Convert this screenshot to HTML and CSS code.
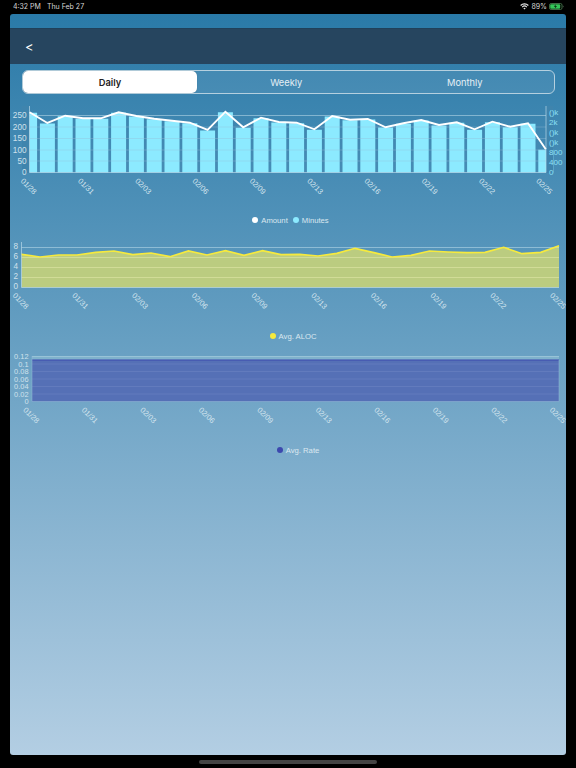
FILE: index.html
```html
<!DOCTYPE html>
<html lang="en">
<head>
<meta charset="utf-8">
<title>Daily charts</title>
<link rel="stylesheet" href="styles.css">
</head>
<body>
<div class="status">
  <div class="status-left"><span>4:32 PM</span><span>Thu Feb 27</span></div>
  <div class="status-right">
    <svg class="wifi" viewBox="0 0 12 9"><path d="M6 8.6 4.4 6.8a2.3 2.3 0 0 1 3.2 0zM3.4 5.8 2.4 4.7a5.2 5.2 0 0 1 7.2 0L8.6 5.8a3.8 3.8 0 0 0-5.2 0zM1.4 3.7.3 2.6a8.2 8.2 0 0 1 11.4 0l-1.1 1.1a6.7 6.7 0 0 0-9.2 0z"/></svg>
    <span>89%</span>
    <svg class="battery" viewBox="0 0 15 7"><rect class="bat-shell" x=".5" y=".5" width="12.5" height="6" rx="1.6"/><rect class="bat-fill" x="1.2" y="1.2" width="10" height="4.6" rx="1"/><path class="bat-bolt" d="M6.8 1.2 4.8 3.8h1.5l-.5 2 2.2-2.7H6.5z"/><path class="bat-cap" d="M13.8 2.5c.6.2.9.6.9 1s-.3.8-.9 1z"/></svg>
  </div>
</div>
<main class="app">
  <header class="topbar"><span class="back">&lt;</span></header>
  <nav class="segments">
    <div class="segment active">Daily</div>
    <div class="segment">Weekly</div>
    <div class="segment">Monthly</div>
  </nav>

  <section class="chart chart-one">
    <svg class="plot plot-one" viewBox="10 100 556 100">
      <path class="bars" d="M29.6 172.5V112.8M47.4 172.5V123.5M65.2 172.5V116.2M83 172.5V118.8M100.8 172.5V118.8M118.6 172.5V112.8M136.4 172.5V116.5M154.2 172.5V119.2M172 172.5V121.2M189.8 172.5V123.2M207.6 172.5V130.5M225.4 172.5V112.2M243.2 172.5V127.8M261 172.5V118.2M278.8 172.5V122.5M296.6 172.5V123.2M314.4 172.5V129.8M332.2 172.5V116.5M350 172.5V120.2M367.8 172.5V119.5M385.6 172.5V127.5M403.4 172.5V123.8M421.2 172.5V120.5M439 172.5V125.5M456.8 172.5V122.8M474.6 172.5V129.8M492.4 172.5V122.2M510.2 172.5V127.2M528 172.5V123.8M545.8 172.5V149.8"/>
      <path class="edge-mask" d="M22 106h7.5v67H22zM546 106h7v67h-7z"/>
      <path class="grid-strong" d="M29.5 115.5H546"/>
      <path class="grid" d="M29.5 127H546M29.5 138.5H546M29.5 150H546M29.5 161H546"/>
      <path class="axis" d="M29.5 106V172.5H546V106"/>
      <polyline class="line-white" points="29.6,112.3 47.4,123 65.2,115.7 83,118.3 100.8,118.3 118.6,112.3 136.4,116 154.2,118.7 172,120.7 189.8,122.7 207.6,130 225.4,111.7 243.2,127.3 261,117.7 278.8,122 296.6,122.7 314.4,129.3 332.2,116 350,119.7 367.8,119 385.6,127.3 403.4,123.3 421.2,120 439,125 456.8,122.3 474.6,129.3 492.4,121.7 510.2,126.7 528,123.3 545.8,149.3"/>
      <g class="ylabels">
        <text x="26.5" y="118">250</text><text x="26.5" y="129.5">200</text><text x="26.5" y="141">150</text><text x="26.5" y="152.5">100</text><text x="26.5" y="164">50</text><text x="26.5" y="175">0</text>
      </g>
      <g class="rlabels">
        <text x="549" y="115">()k</text><text x="549" y="125">2k</text><text x="549" y="135">()k</text><text x="549" y="145">()k</text><text x="549" y="155">800</text><text x="549" y="165">400</text><text x="549" y="175">0</text>
      </g>
      <g class="xlabels">
        <text x="29" y="189" transform="rotate(45 29 186)">01/28</text>
        <text x="86.3" y="189" transform="rotate(45 86.3 186)">01/31</text>
        <text x="143.6" y="189" transform="rotate(45 143.6 186)">02/03</text>
        <text x="200.9" y="189" transform="rotate(45 200.9 186)">02/06</text>
        <text x="258.2" y="189" transform="rotate(45 258.2 186)">02/09</text>
        <text x="315.5" y="189" transform="rotate(45 315.5 186)">02/13</text>
        <text x="372.8" y="189" transform="rotate(45 372.8 186)">02/16</text>
        <text x="430.1" y="189" transform="rotate(45 430.1 186)">02/19</text>
        <text x="487.4" y="189" transform="rotate(45 487.4 186)">02/22</text>
        <text x="544.7" y="189" transform="rotate(45 544.7 186)">02/25</text>
      </g>
    </svg>
    <div class="legend">
      <span class="key"><i class="dot dot-white"></i>Amount</span>
      <span class="key"><i class="dot dot-cyan"></i>Minutes</span>
    </div>
  </section>

  <section class="chart chart-two">
    <svg class="plot plot-two" viewBox="10 240 556 80">
      <polygon class="area-yellow" points="21.6,288.5 21.6,255.3 40,258 58.6,256 77,256 95.7,253.3 114,252 132.8,255.7 151,254 170,257.7 188.4,252 207,256 225.5,251.7 244,256.3 262.6,251.7 281,255.7 299.7,255.3 318,257 336.8,254.3 355,249.3 373.9,253.7 392,258 411,256.3 429.5,252 448,253 466.6,253.7 485,253.3 503.7,248.3 522,254.7 540.8,253.3 559,246.7 559,288.5"/>
      <path class="grid-yellow" d="M21.5 258.5H559M21.5 268.5H559M21.5 278.5H559"/>
      <path class="grid-strong" d="M21.5 248.5H559"/>
      <path class="axis" d="M21.5 243V288.5H559"/>
      <polyline class="line-yellow" points="21.6,255.3 40,258 58.6,256 77,256 95.7,253.3 114,252 132.8,255.7 151,254 170,257.7 188.4,252 207,256 225.5,251.7 244,256.3 262.6,251.7 281,255.7 299.7,255.3 318,257 336.8,254.3 355,249.3 373.9,253.7 392,258 411,256.3 429.5,252 448,253 466.6,253.7 485,253.3 503.7,248.3 522,254.7 540.8,253.3 559,246.7"/>
      <g class="ylabels">
        <text x="18" y="250">8</text><text x="18" y="260">6</text><text x="18" y="270">4</text><text x="18" y="280">2</text><text x="18" y="290">0</text>
      </g>
      <g class="xlabels">
        <text x="21" y="304.7" transform="rotate(45 21 301.7)">01/28</text>
        <text x="80.7" y="304.7" transform="rotate(45 80.7 301.7)">01/31</text>
        <text x="140.4" y="304.7" transform="rotate(45 140.4 301.7)">02/03</text>
        <text x="200.1" y="304.7" transform="rotate(45 200.1 301.7)">02/06</text>
        <text x="259.8" y="304.7" transform="rotate(45 259.8 301.7)">02/09</text>
        <text x="319.5" y="304.7" transform="rotate(45 319.5 301.7)">02/13</text>
        <text x="379.2" y="304.7" transform="rotate(45 379.2 301.7)">02/16</text>
        <text x="438.9" y="304.7" transform="rotate(45 438.9 301.7)">02/19</text>
        <text x="498.6" y="304.7" transform="rotate(45 498.6 301.7)">02/22</text>
        <text x="558.3" y="304.7" transform="rotate(45 558.3 301.7)">02/25</text>
      </g>
    </svg>
    <div class="legend">
      <span class="key"><i class="dot dot-yellow"></i>Avg. ALOC</span>
    </div>
  </section>

  <section class="chart chart-three">
    <svg class="plot plot-three" viewBox="10 350 556 80">
      <rect class="band" x="32" y="357.5" width="527" height="4"/>
      <rect class="area-blue" x="32" y="361" width="527" height="41.5"/>
      <path class="grid-blue" d="M32 365H559M32 372.5H559M32 380H559M32 387.5H559M32 395H559"/>
      <path class="grid-top" d="M32 357.5H559"/>
      <path class="line-blue" d="M32 361H559"/>
      <path class="axis-soft" d="M32 357V402.5H559V361"/>
      <g class="ylabels small">
        <text x="28.5" y="360">0.12</text><text x="28.5" y="367.5">0.1</text><text x="28.5" y="375">0.08</text><text x="28.5" y="382.5">0.06</text><text x="28.5" y="390">0.04</text><text x="28.5" y="397.5">0.02</text><text x="28.5" y="405">0</text>
      </g>
      <g class="xlabels">
        <text x="31.7" y="419" transform="rotate(45 31.7 416)">01/28</text>
        <text x="90.2" y="419" transform="rotate(45 90.2 416)">01/31</text>
        <text x="148.7" y="419" transform="rotate(45 148.7 416)">02/03</text>
        <text x="207.2" y="419" transform="rotate(45 207.2 416)">02/06</text>
        <text x="265.7" y="419" transform="rotate(45 265.7 416)">02/09</text>
        <text x="324.2" y="419" transform="rotate(45 324.2 416)">02/13</text>
        <text x="382.7" y="419" transform="rotate(45 382.7 416)">02/16</text>
        <text x="441.2" y="419" transform="rotate(45 441.2 416)">02/19</text>
        <text x="499.7" y="419" transform="rotate(45 499.7 416)">02/22</text>
        <text x="558.2" y="419" transform="rotate(45 558.2 416)">02/25</text>
      </g>
    </svg>
    <div class="legend">
      <span class="key"><i class="dot dot-blue"></i>Avg. Rate</span>
    </div>
  </section>
</main>
<div class="home"><span class="home-bar"></span></div>
</body>
</html>
```
FILE: styles.css
```css
* { box-sizing: border-box; }
html, body { margin: 0; height: 100%; }
body {
  width: 576px;
  height: 768px;
  overflow: hidden;
  background: #000;
  font-family: "Inter", "Liberation Sans", sans-serif;
  display: flex;
  flex-direction: column;
}
.status {
  height: 14px;
  flex: none;
  display: flex;
  justify-content: space-between;
  align-items: center;
  padding: 0 12px 2px 13px;
  color: #d8d8d8;
  font-size: 7px;
}
.status-left { display: flex; gap: 6px; }
.status-right { display: flex; align-items: center; gap: 2px; }
.wifi { width: 9px; height: 7px; fill: #e8e8e8; }
.battery { width: 15px; height: 7px; }
.bat-shell { fill: none; stroke: #3f6b44; }
.bat-fill { fill: #35c759; }
.bat-bolt { fill: #0c2a12; }
.bat-cap { fill: #4f5f52; }

.app {
  margin: 0 10px;
  height: 741px;
  flex: none;
  border-radius: 3px;
  overflow: hidden;
  background: linear-gradient(180deg, #2a7aa8 0%, #b3cee3 100%);
  padding-top: 14px;
  display: flex;
  flex-direction: column;
}
.topbar {
  height: 36px;
  flex: none;
  background: #26455f;
  border-top: 1px solid #20405a;
  display: flex;
  align-items: center;
  padding-left: 15px;
}
.back { color: #fff; font-size: 13px; }

.segments {
  display: grid;
  grid-template-columns: 174px 1fr 1fr;
  height: 24px;
  flex: none;
  margin: 6px 11px 0 12px;
  border: 1px solid #b5d0df;
  border-radius: 6px;
  background: rgba(255, 255, 255, 0.08);
}
.segment {
  display: flex;
  align-items: center;
  justify-content: center;
  color: #e4eff5;
  font-size: 9.3px;
  border-radius: 5px;
}
.segment.active {
  background: #fff;
  color: #222;
  font-weight: 600;
  box-shadow: 0 0 1px rgba(0, 0, 0, 0.3);
}

.chart { flex: none; }
.plot { display: block; width: 556px; }
.plot-one { height: 100px; margin-top: 6px; }
.plot-two { height: 80px; margin-top: 14px; }
.plot-three { height: 80px; margin-top: 8px; }

.bars { stroke: #8ceaff; stroke-width: 15; fill: none; }
.edge-mask { fill: #3f84ad; }
.grid { stroke: rgba(150, 190, 215, 0.38); stroke-width: 1; fill: none; }
.grid-strong { stroke: rgba(190, 220, 235, 0.55); stroke-width: 1; fill: none; }
.axis { stroke: rgba(190, 220, 235, 0.65); stroke-width: 1; fill: none; }
.axis-soft { stroke: rgba(150, 185, 215, 0.5); stroke-width: 1; fill: none; }
.line-white { stroke: #fff; stroke-width: 1.9; fill: none; }
.area-yellow { fill: #bbcc80; }
.grid-yellow { stroke: rgba(255, 255, 200, 0.32); stroke-width: 1; fill: none; }
.line-yellow { stroke: #f6ea3d; stroke-width: 1.7; fill: none; }
.area-blue { fill: #5570b6; }
.band { fill: #7fb2cc; }
.grid-blue { stroke: #627bbd; stroke-width: 1; fill: none; }
.grid-top { stroke: #98c3d7; stroke-width: 1; fill: none; }
.line-blue { stroke: #3c48ae; stroke-width: 1.2; fill: none; }

.ylabels text { fill: #cfe1ec; font-size: 8.2px; text-anchor: end; font-family: "Liberation Sans", sans-serif; }
.ylabels.small text { font-size: 7.4px; }
.rlabels text { fill: #8ce0f7; font-size: 8px; font-family: "Liberation Sans", sans-serif; }
.xlabels text { fill: #d3e4ee; font-size: 7.6px; text-anchor: middle; font-family: "Liberation Sans", sans-serif; }

.legend {
  display: flex;
  justify-content: center;
  gap: 5px;
  height: 10px;
  align-items: center;
  color: #dbe8f0;
  font-size: 7.7px;
  font-family: "Liberation Sans", sans-serif;
}
.chart-one .legend { margin-top: 15px; padding-left: 5px; }
.chart-two .legend { margin-top: 12px; padding-left: 10px; }
.chart-three .legend { margin-top: 16px; padding-left: 20px; }
.key { display: flex; align-items: center; gap: 3px; }
.dot { width: 6px; height: 6px; border-radius: 50%; display: block; }
.dot-white { background: #fff; }
.dot-cyan { background: #8ceaff; }
.dot-yellow { background: #f6ea3d; }
.dot-blue { background: #3c48ae; }

.home { flex: 1; display: flex; justify-content: center; padding-top: 5px; }
.home-bar { width: 178px; height: 3.5px; border-radius: 2px; background: #444; }
```
